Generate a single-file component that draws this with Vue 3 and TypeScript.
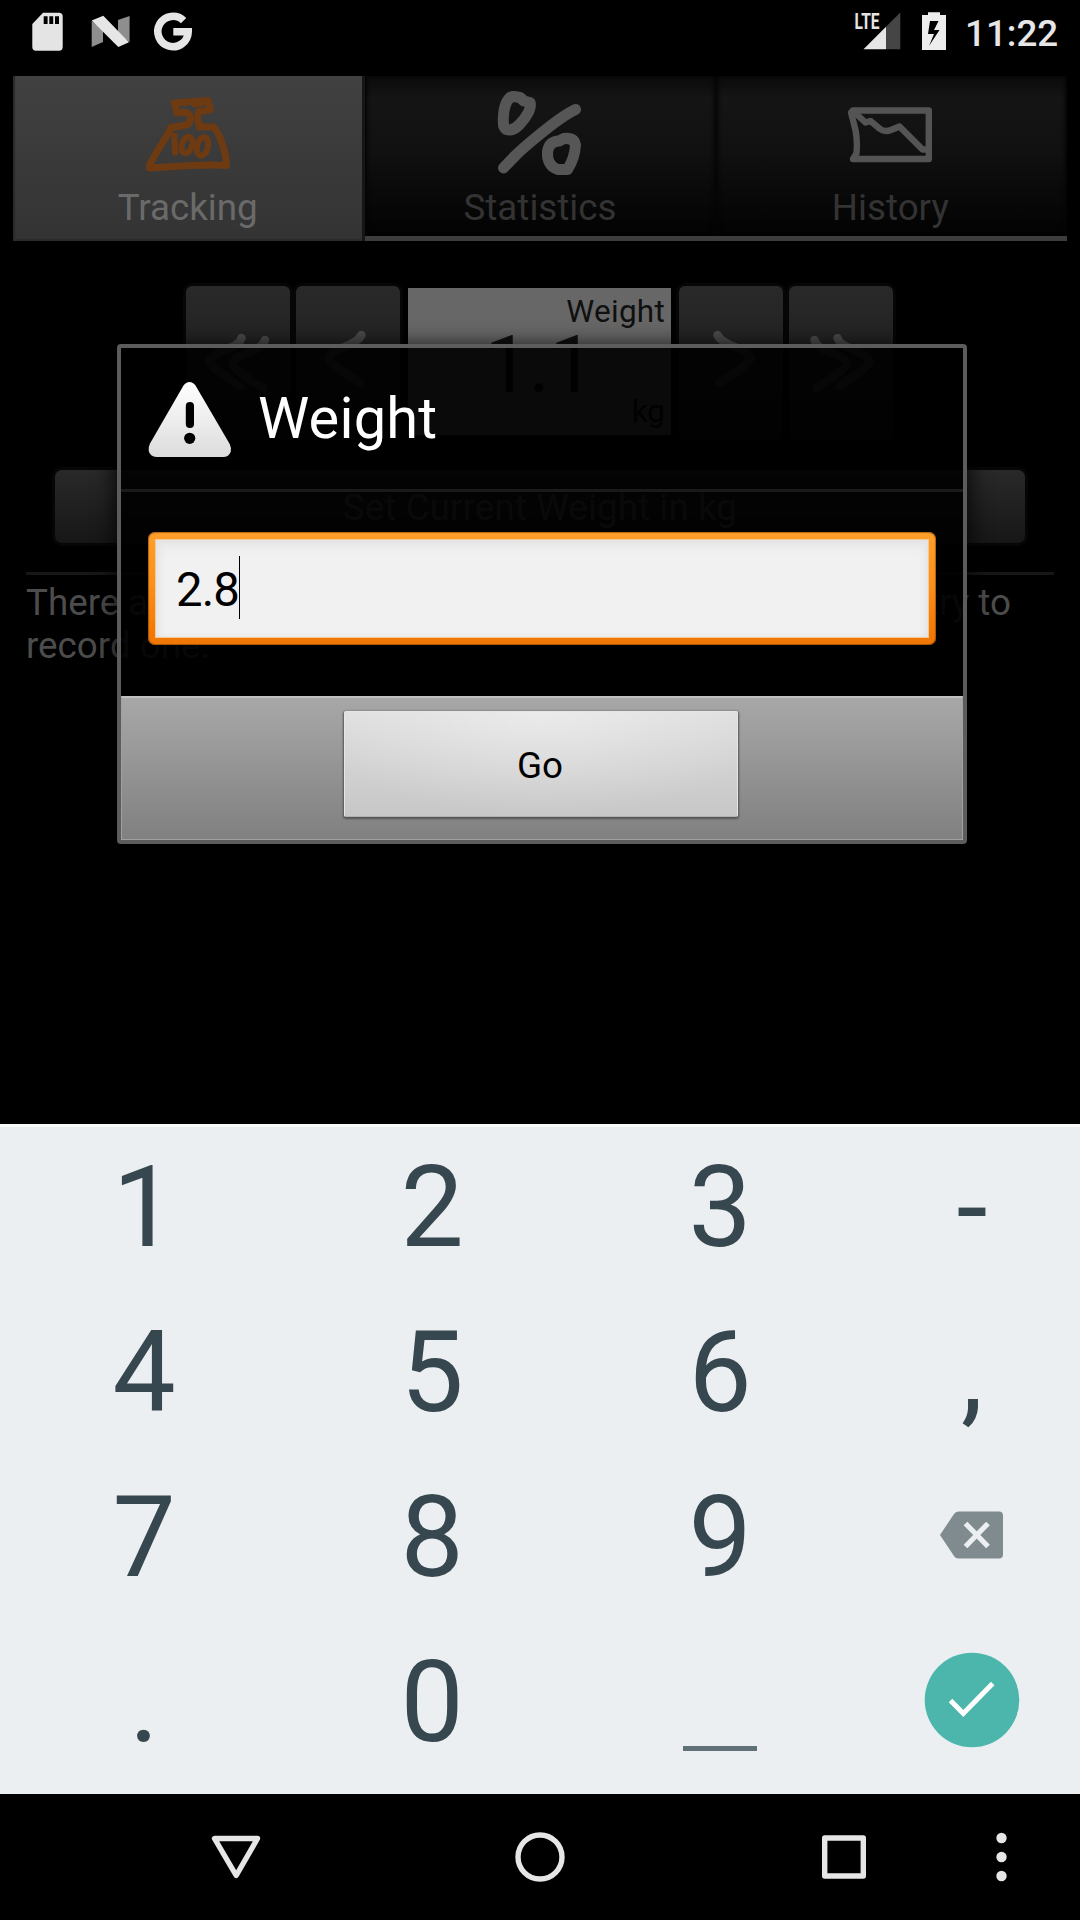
<script setup lang="ts">
import { ref } from 'vue'

interface Key {
  id: string
  label?: string
  kind: 'char' | 'space' | 'delete' | 'done'
}

const char = (label: string): Key => ({ id: label, label, kind: 'char' })

const keys: Key[] = [
  char('1'), char('2'), char('3'), char('-'),
  char('4'), char('5'), char('6'), char(','),
  char('7'), char('8'), char('9'), { id: 'delete', kind: 'delete' },
  char('.'), char('0'), { id: 'space', kind: 'space' }, { id: 'done', kind: 'done' },
]

const entry = ref('2.8')

function press(key: Key) {
  if (key.kind === 'char') entry.value += key.label
  if (key.kind === 'delete') entry.value = entry.value.slice(0, -1)
}
</script>

<template>
  <div class="screen">
    <header class="status">
      <svg class="status-left" width="200" height="63" viewBox="0 0 200 63">
        <path fill="#e4e4e4" fill-rule="evenodd" d="M43 12.7H59Q62.7 12.7 62.7 16.4V47Q62.7 50.7 59 50.7H36Q32.3 50.7 32.3 47V24ZM43.7 16.3V24H47.6V16.3ZM49.3 16.3V24H53.2V16.3ZM55 16.3V24H59V16.3Z" />
        <path fill="#8e8e8e" d="M91.700 21L103 30V42L91.700 47ZM118 20L129.600 16V42L118 34Z" />
        <path fill="#e6e6e6" d="M91.700 20.500L103.300 15.700L129 42.200L118.300 47Z" />
        <path fill="none" stroke="#e6e6e6" stroke-width="7.6" d="M183.6 20.6A15.2 15.2 0 1 0 188.2 31.7H173.3" />
      </svg>
      <svg class="status-right" width="100" height="63" viewBox="850 0 100 63">
        <text x="854.5" y="29" font-size="22" font-weight="700" textLength="25" lengthAdjust="spacingAndGlyphs" fill="#e4e4e4">LTE</text>
        <path fill="#e6e6e6" d="M863.5 49.3L886 26.8V49.3Z" />
        <path fill="#454545" d="M886 26.8L900.3 12.5V49.3H886Z" />
        <path fill="#ededed" fill-rule="evenodd" d="M928 15V12.3H940V15H946V50H922V15ZM930 21L928 34H934L929 46L939.5 30H934L938.5 21Z" />
      </svg>
      <span class="clock">11:22</span>
    </header>

    <main class="app">
      <nav class="tabs">
        <div class="tab active">
          <svg width="86" height="78" viewBox="145 96 86 78" fill="none" stroke="#6e3a11" stroke-width="7" stroke-linejoin="round" stroke-linecap="round">
            <path d="M174.500 103L208 100.500L210.500 109.500L198.500 111.800L197.500 118L199.500 127H213C218 130 226 150 226.500 165.500C205 163.500 180 166 149.500 168L149.500 164.500L169.500 131L171 127.500L187 125C193 120 191 113 184 112L177 113Z" />
            <path stroke-width="4" d="M194 105.500L203 104" />
            <path stroke-width="6.500" d="M174.300 136L175.300 152.500" />
            <ellipse cx="187" cy="145" rx="5" ry="8.500" stroke-width="6" transform="rotate(16 187 145)" />
            <ellipse cx="202.500" cy="146.500" rx="5.500" ry="9.500" stroke-width="6" transform="rotate(13 202.500 146.500)" />
          </svg>
          <span>Tracking</span>
        </div>
        <div class="tab">
          <svg class="percent" width="86" height="88" viewBox="495 90 86 88" fill="none" stroke="#565656" stroke-width="11" stroke-linejoin="round" stroke-linecap="round">
            <path d="M513 97.500L519 98.500L523 102L529 103.500C531 109 525 119 518 126C512 132 505 133 502.700 127C501.500 118 503 106 507 101Q509 97.500 513 97.500Z" />
            <path d="M574.500 110.500C556 119 519 152 514 157Q508 163 502.500 169" />
            <path d="M563 139.500Q573 138.500 574.500 146C574 156 570 165 566.500 170.500H557C549 168 546 161 546.500 153C547.500 145 552 142 558 142Z" />
          </svg>
          <span>Statistics</span>
        </div>
        <div class="tab">
          <svg width="86" height="60" viewBox="848 104 86 60" fill="none" stroke="#545454" stroke-width="6.400" stroke-linejoin="round">
            <path d="M854 109.500H929.800V158H854L857.500 152.500Q859 136 855 123L852 111.500Z" />
            <path d="M854 110L866.500 121.500L871.500 120L881 128Q886 131.500 892 129L900.500 125.500L923.500 148.500H930" />
          </svg>
          <span>History</span>
        </div>
      </nav>

      <section class="picker">
        <button class="step">
          <svg width="104" height="154" viewBox="186 286 104 154"><path d="M241.500 338Q240 344 227 349Q212 355 209.500 361Q211 368 240.500 386.500M265 340Q263 347 250 352Q236 357 232.500 363Q233 370 263.500 388.500" /></svg>
        </button>
        <button class="step">
          <svg width="104" height="154" viewBox="296 286 104 154"><path d="M361.500 335Q358 342 344 347Q330 352 328.500 358Q331 365 360 383" /></svg>
        </button>
        <div class="readout">
          <span class="name">Weight</span>
          <span class="value">1.1</span>
          <span class="unit">kg</span>
        </div>
        <button class="step">
          <svg width="104" height="154" viewBox="679 286 104 154"><path d="M717.500 335Q721 342 735 347Q749 352 750.500 358Q748 365 719 383" /></svg>
        </button>
        <button class="step">
          <svg width="104" height="154" viewBox="789 286 104 154"><path d="M837.500 338Q839 344 852 349Q867 355 869.500 361Q868 368 839 386.500M814.500 340Q816 347 829 352Q844 357 847 363Q846 370 816 388.500" /></svg>
        </button>
      </section>

      <button class="set">Set Current Weight in kg</button>
      <hr />
      <p class="hint"><span class="line"><span>There are</span><span>entry to</span></span>record one.</p>
    </main>

    <section class="dialog">
      <div class="title">
        <svg width="84" height="78" viewBox="148 381 84 78">
          <defs>
            <linearGradient id="alertFill" x1="0" y1="0" x2="0" y2="1">
              <stop offset="0" stop-color="#fff" />
              <stop offset="1" stop-color="#dcdcdc" />
            </linearGradient>
          </defs>
          <path fill="url(#alertFill)" d="M183.500 385.500Q186 382 189.500 382Q193 382 195.500 385.500L229.700 444Q231.500 448 230.800 451.500Q229 457 223 457H156.500Q150 456.500 148.700 451Q148 447.500 150 443.500Z" />
          <rect x="185.800" y="402" width="8.200" height="26" rx="4" fill="#000" />
          <circle cx="189.700" cy="438.300" r="5.600" fill="#000" />
        </svg>
        <h1>Weight</h1>
      </div>
      <div class="body">
        <div class="field"><div class="inner"><span>{{ entry }}</span><i class="caret"></i></div></div>
      </div>
      <div class="actions"><button class="go">Go</button></div>
    </section>

    <section class="keyboard">
      <button v-for="key in keys" :key="key.id" class="key" @click="press(key)">
        <span v-if="key.kind === 'char'">{{ key.label }}</span>
        <svg v-else-if="key.kind === 'delete'" class="raised" width="64" height="48" viewBox="0 0 64 48">
          <path fill="#808b8f" d="M18.500 .5H59Q63 .5 63 4.500V43.500Q63 47.500 59 47.500H18.500Q15.500 47.500 14 45L0 24L14 3Q15.500 .5 18.500 .5Z" />
          <path stroke="#eceff1" stroke-width="5.200" d="M25.500 12.500L48 35.500M48 12.500L25.500 35.500" />
        </svg>
        <i v-else-if="key.kind === 'space'" class="space"></i>
        <svg v-else class="raised" width="96" height="96" viewBox="0 0 96 96">
          <circle cx="48" cy="48" r="47.300" fill="#4db6ac" />
          <path fill="none" stroke="#fff" stroke-width="5" d="M26.500 48.500L39.300 61.500L68.700 31.500" />
        </svg>
      </button>
    </section>

    <footer class="navbar">
      <svg width="1080" height="126" viewBox="0 1794 1080 126" fill="none" stroke="#e6e6e6" stroke-width="5.400" stroke-linejoin="round">
        <path d="M214.500 1838.500H257.500L236.200 1875.500Z" />
        <circle cx="540" cy="1857" r="22" />
        <rect x="824.700" y="1838" width="38.600" height="38" />
        <g fill="#e6e6e6" stroke="none">
          <circle cx="1001.500" cy="1838" r="5.200" />
          <circle cx="1001.500" cy="1857" r="5.200" />
          <circle cx="1001.500" cy="1876" r="5.200" />
        </g>
      </svg>
    </footer>
  </div>
</template>

<style>
body { margin: 0; background: #000; }
</style>

<style scoped>
.screen {
  position: relative;
  display: flex;
  flex-direction: column;
  width: 1080px;
  height: 1920px;
  overflow: hidden;
  background: #000;
  color: #fff;
  font-family: Roboto, "Noto Sans", sans-serif;
}
.screen * { box-sizing: border-box; }
svg { display: block; flex: none; }
button { border: 0; padding: 0; margin: 0; background: none; font: inherit; color: inherit; }

.status { display: flex; flex: none; height: 63px; }
.status-right { margin-left: 650px; font-family: Roboto, sans-serif; }
.clock { margin-left: 15px; font-size: 36.750px; font-weight: 500; line-height: 67px; color: #e6e6e6; }

.app { height: 1061px; flex: none; padding-top: 13px; }
.tabs { display: flex; height: 165px; margin: 0 13px; }
.tab {
  display: flex;
  flex: 1;
  flex-direction: column;
  justify-content: flex-end;
  align-items: center;
  padding: 0 1px 7px 0;
  font-size: 36.750px;
  line-height: 43px;
  color: #333;
  background: linear-gradient(#0a0a0a, #151515 14%, #111 45%, #030303 96%);
  border-bottom: 5px solid #3d3d3d;
  box-shadow: inset 4px 0 4px -2px #050505, inset -4px 0 4px -2px #050505;
}
.tab .percent { margin: 0 2px 9px 0; }
.tab:last-child { padding-right: 2px; }
.tab:last-child svg { margin: 0 0 21px 0; }
.tab.active {
  padding: 0 0 12px;
  border: 0;
  border-right: 3px solid #161616;
  color: #6a6a6a;
  background: linear-gradient(#414141, #333) padding-box;
  box-shadow: inset 2px -2px 1px #2b2b2b;
}
.tab.active svg { margin: 0 0 12px 0; }

.picker { display: flex; justify-content: center; height: 154px; margin: 45px 1px 0 0; }
.step {
  width: 104px;
  border-radius: 6px;
  background: linear-gradient(#292929, #191919);
  box-shadow: 0 0 0 3px #060606;
}
.step + .step { margin-left: 6px; }
.step path { fill: none; stroke: #4b4b4b; stroke-width: 8.500px; stroke-linecap: round; stroke-linejoin: round; }
.readout {
  display: flex;
  flex-direction: column;
  width: 263px;
  height: 147px;
  margin: 2px 8px 0;
  padding: 5px 6px 0 0;
  text-align: right;
  font-size: 31.500px;
  line-height: 37px;
  color: #101010;
  background: #676767;
}
.readout .name { letter-spacing: 0.25px; }
.readout .value { margin: 5px 0 -2px; padding-right: 71px; font-size: 78.750px; line-height: 60px; }

.set {
  display: block;
  width: 970px;
  height: 73px;
  margin: 30px 55px 0;
  border-radius: 7px;
  font-size: 36.750px;
  line-height: 76px;
  letter-spacing: 0.1px;
  color: #5a5a5a;
  background: linear-gradient(#292929, #171717);
  box-shadow: 0 0 0 3px #060606;
}
hr { height: 3px; margin: 29px 26px 0; border: 0; background: #171717; }
.hint { margin: 6px 69px 0 26px; font-size: 36.750px; line-height: 43px; color: #4c4c4c; }
.hint .line { display: flex; justify-content: space-between; }

.dialog {
  position: absolute;
  left: 117px;
  top: 344px;
  display: flex;
  flex-direction: column;
  width: 850px;
  height: 500px;
  border: 4px solid #5c5c5c;
  border-radius: 4px;
  background: rgba(0, 0, 0, 0.9);
  background-clip: padding-box;
  box-shadow: 0 4px 22px 2px rgba(0, 0, 0, 0.85);
}
.title {
  display: flex;
  height: 144px;
  padding: 33px 27px 0;
  border-bottom: 3px solid #1a1a1a;
}
.title h1 { margin: 3px 0 0 26px; font-size: 57.750px; font-weight: 400; line-height: 68px; letter-spacing: 0.2px; }
.body { flex: 1; padding: 40px 27px 0; }
.field {
  height: 113px;
  padding: 7px;
  border-radius: 7px;
  background: linear-gradient(#ff9f2a, #fb901d 45%, #f27805 90%);
  box-shadow: inset 0 0 1px 1px rgba(110, 55, 0, 0.55);
}
.inner {
  display: flex;
  align-items: center;
  height: 99px;
  padding-left: 20px;
  font-size: 47.250px;
  letter-spacing: -0.900px;
  color: #000;
  background: #f1f1f1;
  border: 1px solid #f5c894;
  box-shadow: inset 0 8px 12px -3px #e3e3e3, inset 5px 0 8px -4px #ddd, inset -5px 0 8px -4px #ddd;
}
.inner span { padding-top: 2px; }
.caret { width: 1px; height: 63px; margin-top: -2px; background: #000; }
.actions {
  display: flex;
  justify-content: center;
  height: 144px;
  padding: 13px 2px 0 0;
  background: linear-gradient(#a7a7a7, #a0a0a0 20%, #808080);
  border: solid #a0a0a0;
  border-width: 2px 1px 1px;
  border-top-color: #c0c0c0;
}
.go {
  width: 394px;
  height: 106px;
  padding: 2px 2px 0 0;
  border-radius: 2px;
  font-size: 36.750px;
  line-height: 104px;
  color: #000;
  background: radial-gradient(ellipse 60% 100% at 50% 0, rgba(255, 255, 255, 0.4), transparent), linear-gradient(#dedede, #c7c7c7);
  border: 1px solid #e6e6e6;
  border-bottom-color: #b0b0b0;
  box-shadow: 0 1px 2px 1px #555;
}

.keyboard {
  display: grid;
  flex: none;
  grid-template-columns: 288px 288px 288px 216px;
  grid-template-rows: repeat(4, 165px);
  height: 670px;
  background: #eceff1;
  box-shadow: inset 0 3px #f9fafa;
}
.key {
  display: flex;
  align-items: center;
  justify-content: center;
  font-size: 112.500px;
  line-height: 163px;
  color: #37474f;
}
.key span { padding-top: 2px; }
.raised { margin-bottom: 4px; }
.space { align-self: flex-end; width: 74px; height: 5px; margin-bottom: 33px; background: #607077; }
.navbar { flex: none; height: 126px; background: #000; }
</style>
